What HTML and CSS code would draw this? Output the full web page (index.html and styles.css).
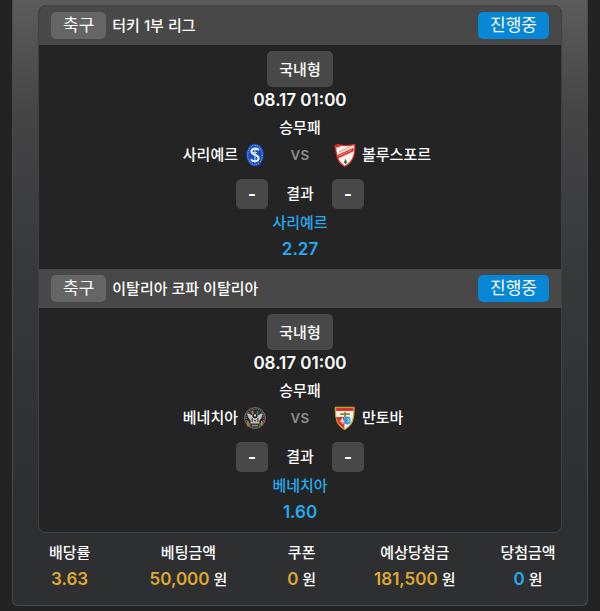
FILE: index.html
```html
<!DOCTYPE html>
<html lang="ko">
<head>
<meta charset="utf-8">
<meta name="viewport" content="width=device-width, initial-scale=1">
<title>베팅 내역</title>
<link rel="stylesheet" href="styles.css">
</head>
<body>
<main class="slip">
  <div class="games">
    <section class="game">
      <header class="game-head">
        <span class="sport">축구</span>
        <h2 class="league">터키 1부 리그</h2>
        <span class="status">진행중</span>
      </header>
      <div class="game-body">
        <button class="kind" type="button">국내형</button>
        <time class="line num">08.17 01:00</time>
        <div class="line">승무패</div>
        <div class="teams">
          <div class="team home">
            <span>사리예르</span>
            <svg class="crest" viewBox="0 0 22 24" aria-hidden="true">
              <ellipse cx="11" cy="12" rx="8.7" ry="11.2" fill="#1451c8"/>
              <ellipse cx="11" cy="12" rx="7.3" ry="9.7" fill="none" stroke="#6f93df" stroke-width="1.3" stroke-dasharray="1.2 1"/>
              <ellipse cx="11" cy="12" rx="5.9" ry="8.2" fill="#174fc0"/>
              <path d="M14.8 7.2C13.2 4.6 7.4 5.4 7.4 8.8C7.4 12.2 14.7 11.3 14.6 15.2C14.5 18.9 8.6 19.3 7 16.2" fill="none" stroke="#f2f5ff" stroke-width="2"/>
              <path d="M11 4.6V19.6M9.2 9.6H13" stroke="#d8e2fa" stroke-width="1"/>
            </svg>
          </div>
          <span class="versus">vs</span>
          <div class="team away">
            <svg class="crest" viewBox="0 0 22 24" aria-hidden="true">
              <path d="M1.5 3.2Q3.5 5 5 2.1Q12 3.2 20.7 1.6Q21.3 9 19.3 14Q17 20.3 10.7 23.4Q4.8 20 3.2 14L2 8.4Z" fill="#fff4ef" stroke="#df2b24" stroke-width="1.2"/>
              <path d="M3 12.2L19.6 4.4V8.2L4 15.4Z" fill="#e22f29"/>
              <path d="M5 12.9L18.4 6.7" stroke="#f7aaa0" stroke-width="1" stroke-dasharray="1.7 .8"/>
              <path d="M5 9L17.5 3.2" stroke="#e8645b" stroke-width=".8"/>
              <path d="M1.2 5.6Q.4 2 3.6 1.8Q5.8 2 5 4.2" fill="none" stroke="#e22f29" stroke-width="1.5"/>
              <path d="M11.5 15.8L13.4 20H9.6Z" fill="#23824b"/>
              <path d="M11.5 18V21" stroke="#26633d" stroke-width="1"/>
            </svg>
            <span>볼루스포르</span>
          </div>
        </div>
        <div class="result">
          <span class="score">-</span>
          <span class="result-label">결과</span>
          <span class="score">-</span>
        </div>
        <div class="line pick">사리예르</div>
        <div class="line num pick">2.27</div>
      </div>
    </section>

    <section class="game">
      <header class="game-head">
        <span class="sport">축구</span>
        <h2 class="league">이탈리아 코파 이탈리아</h2>
        <span class="status">진행중</span>
      </header>
      <div class="game-body">
        <button class="kind" type="button">국내형</button>
        <time class="line num">08.17 01:00</time>
        <div class="line">승무패</div>
        <div class="teams">
          <div class="team home">
            <span>베네치아</span>
            <svg class="crest" viewBox="0 0 22 24" aria-hidden="true">
              <circle cx="11" cy="12" r="10.4" fill="#2b2a29" stroke="#77736d" stroke-width="1"/>
              <circle cx="11" cy="12" r="8.8" fill="none" stroke="#77736d" stroke-width="1.3" stroke-dasharray="1 1.2"/>
              <path d="M3.2 7.6Q5.6 6.8 7.5 9.3L9.2 7H13L14.7 9.3Q16.4 6.8 18.8 7.6Q17.6 13 15.4 14.4V17.6H6.6V14.4Q4.4 13 3.2 7.6Z" fill="#bdbdbd"/>
              <path d="M7.2 5.6L9.2 4.4L9.8 7.4L8 8.6Z" fill="#dc7936"/>
              <path d="M13 4.6L15.2 6L14 8.8L12.3 7.2Z" fill="#20855b"/>
              <circle cx="11" cy="9.6" r="2.7" fill="#222"/>
              <circle cx="11" cy="9.4" r="1.1" fill="#e8e8e8"/>
              <path d="M8.2 12V16M13.8 12V16M10 14.6H12M8.4 18.6H13.6" stroke="#444" stroke-width="1.2"/>
              <path d="M8 19.6H14" stroke="#999" stroke-width=".9"/>
              <path d="M4 15V20.4M17.8 15V19" stroke="#e4762c" stroke-width="1.5"/>
              <path d="M5.8 17V21M16.2 17V21.2" stroke="#25885e" stroke-width="1.5"/>
            </svg>
          </div>
          <span class="versus">vs</span>
          <div class="team away">
            <svg class="crest" viewBox="0 0 22 24" aria-hidden="true">
              <path d="M1.4 1.4H20Q20.4 9 18.6 15Q16.3 20.2 10.7 23.4Q5 20.2 2.9 15Q1 9 1.4 1.4Z" fill="#f8f4eb" stroke="#c3a328" stroke-width="1.2"/>
              <path d="M2.1 2H19.4V5H2.1Z" fill="#de3028"/>
              <path d="M2.2 11H10.4V22.4Q5 19.4 3.4 15Q2.6 13 2.2 11Z" fill="#df3228"/>
              <path d="M6.2 8.2H15.8M11 6V11" stroke="#8d8333" stroke-width="1.8"/>
              <ellipse cx="13.2" cy="14.6" rx="3.4" ry="4" fill="#2d9cda"/>
              <path d="M8.8 12L6.4 15.4H10.4M8.8 13V18" fill="none" stroke="#fff" stroke-width="1"/>
              <path d="M13.8 12.3L15 14.2L13.8 16.6" fill="none" stroke="#cceefa" stroke-width="1"/>
            </svg>
            <span>만토바</span>
          </div>
        </div>
        <div class="result">
          <span class="score">-</span>
          <span class="result-label">결과</span>
          <span class="score">-</span>
        </div>
        <div class="line pick">베네치아</div>
        <div class="line num pick">1.60</div>
      </div>
    </section>
  </div>

  <table class="summary">
    <colgroup><col class="c-odds"><col class="c-stake"><col class="c-coupon"><col class="c-expected"><col class="c-payout"></colgroup>
    <thead>
      <tr><th>배당률</th><th>베팅금액</th><th>쿠폰</th><th>예상당첨금</th><th>당첨금액</th></tr>
    </thead>
    <tbody>
      <tr>
        <td><span class="num gold">3.63</span></td>
        <td><span class="num gold">50,000</span> 원</td>
        <td><span class="num gold">0</span> 원</td>
        <td><span class="num gold">181,500</span> 원</td>
        <td><span class="num pick">0</span> 원</td>
      </tr>
    </tbody>
  </table>
</main>
</body>
</html>
```
FILE: styles.css
```css
* {
  box-sizing: border-box;
}

body {
  margin: 0;
  padding: 0 12px 5px;
  background: #232323;
  color: #fff;
  font: 500 15px/27px Inter, "Noto Sans CJK KR", sans-serif;
}

.slip {
  padding: 5px 25px 12px;
  border: 1px solid #48494a;
  border-top: 0;
  border-radius: 0 0 6px 6px;
  background: linear-gradient(#5c5c5c, #454546 110px, #37383a 270px, #2e2f31 500px);
}

.games {
  overflow: hidden;
  border: 1px solid #404142;
  border-top-color: #484848;
  border-radius: 8px;
  background: #242424;
}

.game-head {
  display: flex;
  align-items: center;
  gap: 6px;
  padding: 6px 12px;
  background: #484848;
}

.sport,
.status {
  padding: 0 12px;
  border-radius: 5px;
  font-size: 17px;
  font-weight: 400;
}

.sport {
  background: #656565;
}

.status {
  margin-left: auto;
  background: #0787d5;
}

.league {
  margin: 0;
  font-size: 15px;
  font-weight: 500;
}

.game-body {
  display: flex;
  flex-direction: column;
  align-items: center;
  padding: 6px 0;
}

.kind {
  height: 36px;
  padding: 0 12px;
  border: 0;
  border-radius: 5px;
  background: #484848;
  color: inherit;
  font: inherit;
}

.num {
  font-size: 17px;
  font-weight: 600;
}

.teams {
  display: grid;
  grid-template-columns: 1fr 68px 1fr;
  align-self: stretch;
  text-align: center;
}

.team {
  display: flex;
  align-items: center;
  gap: 6px;
}

.home {
  justify-content: flex-end;
}

.crest {
  width: 22px;
  height: 24px;
}

.versus {
  color: #8c8c8c;
  font-size: 17px;
}

.result {
  display: grid;
  grid-template-columns: 32px 64px 32px;
  margin-top: 11px;
  text-align: center;
  line-height: 30px;
}

.score {
  border-radius: 5px;
  background: #484848;
  font-size: 17px;
  font-weight: 700;
}

.pick {
  color: #25aaf0;
}

.gold {
  color: #dea931;
}

.summary {
  width: calc(100% + 42px);
  margin: 6px -17px 0 -25px;
  border-collapse: collapse;
  table-layout: fixed;
  text-align: center;
}

.summary th,
.summary td {
  height: 27px;
  padding: 0;
  font-weight: 500;
}

.summary .num {
  line-height: 20px;
}

.c-odds {
  width: 20%;
}

.c-stake {
  width: 22%;
}

.c-coupon {
  width: 18%;
}

.c-expected {
  width: 22%;
}

.c-payout {
  width: 18%;
}
```
